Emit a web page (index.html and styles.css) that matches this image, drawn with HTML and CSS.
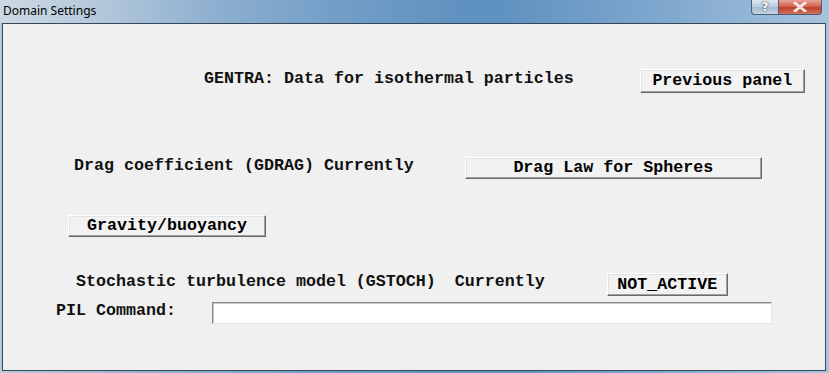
FILE: index.html
```html
<!DOCTYPE html>
<html lang="en">
<head>
    <meta charset="UTF-8">
    <title>Domain Settings</title>
    <link rel="stylesheet" href="styles.css">
</head>
<body>

    <div class="window">
        <div class="titlebar">
            <span class="title">Domain Settings</span>
            <div class="caption-btns">
                <span class="help">?</span>
                <span class="close">
                    <svg width="14" height="10" viewBox="0 0 14 10">
                        <path d="M2 1 L12 9 M12 1 L2 9" stroke="#fff" stroke-width="2.6" stroke-linecap="square"/>
                        <path d="M2 1 L12 9 M12 1 L2 9" stroke="#7a2a20" stroke-width="0.6" fill="none" opacity="0.4"/>
                    </svg>
                </span>
            </div>
        </div>

        <div class="panel">
            <div class="row row-head">
                <span class="label">GENTRA: Data for isothermal particles</span>
                <span class="btn btn-prev">Previous panel</span>
            </div>

            <div class="row row-drag">
                <span class="label">Drag coefficient (GDRAG) Currently</span>
                <span class="btn btn-drag">Drag Law for Spheres</span>
            </div>

            <div class="row row-grav">
                <span class="btn btn-grav">Gravity/buoyancy</span>
            </div>

            <div class="row row-stoch">
                <span class="label">Stochastic turbulence model (GSTOCH)</span>
                <span class="label label-cur">Currently</span>
                <span class="btn btn-state">NOT_ACTIVE</span>
            </div>

            <div class="row row-pil">
                <span class="label">PIL Command:</span>
                <input class="pil" type="text">
            </div>
        </div>
    </div>

</body>
</html>
```

FILE: styles.css
```css
html,body{
    margin: 0;padding: 0;
}
body{
    width: 829px;height: 373px;overflow: hidden;
    background: linear-gradient(90deg, #b9c9d8 0%, #8fb0cf 20%, #6f9dc6 40%, #5e91c0 60%, #80a9cf 80%, #a9c4dd 100%);
}
.window{
    height: 373px;display: flex;flex-direction: column;
}
.titlebar{
    height: 23px;display: flex;align-items: flex-start;justify-content: space-between;
    background: linear-gradient(90deg, rgba(220,228,236,0.55) 0%, rgba(180,200,220,0.2) 25%, rgba(90,140,190,0.25) 55%, rgba(160,190,220,0.2) 100%);
}
.title{
    font-family: "Noto Sans", "Open Sans", sans-serif;font-size: 12px;color: #000;
    margin: 3px 0 0 3px;line-height: 15px;
}
.caption-btns{
    display: flex;margin-right: 7px;
}
.caption-btns span{
    display: flex;align-items: center;justify-content: center;height: 14px;
    border: 1px solid #4a5f78;border-top: 0;
}
.help{
    width: 26px;border-radius: 0 0 0 4px;border-right: 0 !important;
    background: linear-gradient(#dfe8f1, #b9cadb 50%, #a4b9ce 51%, #c3d4e4);
    font-family: "DejaVu Sans", sans-serif;font-size: 12px;font-weight: bold;color: #fff;
    text-shadow: 0 0 2px #3b4c60, 0 0 1px #3b4c60;
}
.close{
    width: 42px;border-radius: 0 0 4px 0;
    background: linear-gradient(#e8a597, #d2634f 45%, #c0402c 55%, #d66f58);
}
.panel{
    margin: 0 3px 2px 2px;flex: 1;
    background: #f0f0f0;border: 1px solid #36475a;
    font-family: "Liberation Mono", "Courier New", monospace;font-size: 16.67px;font-weight: bold;color: #111;
}
.row{
    display: flex;align-items: center;
}
.label{
    line-height: 18px;white-space: pre;
}
.btn{
    display: block;box-sizing: border-box;text-align: center;line-height: 20px;
    background: #f2f2f2;color: #000;
    border: 1px solid;border-color: #fff #6a6a6a #6a6a6a #fff;
    box-shadow: inset -1px -1px 0 #a0a0a0, inset 1px 1px 0 #e3e3e3;
}
.row-head{
    margin-top: 45px;padding-left: 201px;
}
.row-head .label{
    margin-top: -4px;
}
.btn-prev{
    width: 165px;height: 24px;margin-left: 66px;line-height: 22px;
}
.row-drag{
    margin-top: 64px;padding-left: 71px;
}
.row-drag .label{
    margin-top: -5px;
}
.btn-drag{
    width: 297px;height: 22px;margin-left: 51px;
}
.row-grav{
    margin-top: 36px;padding-left: 65px;
}
.btn-grav{
    width: 198px;height: 22px;
}
.row-stoch{
    margin-top: 36px;padding-left: 73px;
}
.row-stoch .label{
    margin-top: -6px;
}
.label-cur{
    margin-left: 19px;
}
.btn-state{
    width: 121px;height: 23px;margin-left: 62px;line-height: 21px;
}
.row-pil{
    margin-top: 6px;padding-left: 53px;
}
.row-pil .label{
    margin-top: -5px;
}
.pil{
    width: 560px;height: 22px;box-sizing: border-box;margin: 0 0 0 36px;padding: 0;
    background: #fff;border: 1px solid;border-color: #8a8a8a #e3e3e3 #e3e3e3 #8a8a8a;
    box-shadow: inset 1px 1px 0 #c8c8c8;outline: none;
}
```
